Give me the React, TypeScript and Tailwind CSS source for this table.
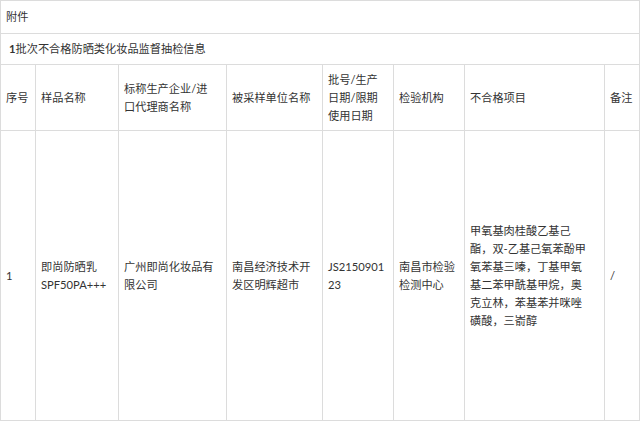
const font = { fontFamily: 'Lato, "Noto Sans CJK SC", sans-serif' }

const cols = [35, 83, 108, 96, 71, 71, 140, 35]

const headers: string[][] = [
  ['序号'],
  ['样品名称'],
  ['标称生产企业/进', '口代理商名称'],
  ['被采样单位名称'],
  ['批号/生产', '日期/限期', '使用日期'],
  ['检验机构'],
  ['不合格项目'],
  ['备注'],
]

const row: string[][] = [
  ['1'],
  ['即尚防晒乳', 'SPF50PA+++'],
  ['广州即尚化妆品有', '限公司'],
  ['南昌经济技术开', '发区明辉超市'],
  ['JS2150901', '23'],
  ['南昌市检验', '检测中心'],
  ['甲氧基肉桂酸乙基己', '酯，双-乙基己氧苯酚甲', '氧苯基三嗪，丁基甲氧', '基二苯甲酰基甲烷，奥', '克立林，苯基苯并咪唑', '磺酸，三嵛醇'],
  ['/'],
]

function Lines({ lines }: { lines: string[] }) {
  return (
    <>
      {lines.map((l, i) => (
        <div key={i} className="whitespace-nowrap">
          {l}
        </div>
      ))}
    </>
  )
}

export default function App() {
  const cell = 'border border-[#dcdcdc] pl-[5px] pr-[4px] align-middle text-left'
  return (
    <div className="w-[640px] h-[422px] bg-white overflow-hidden" style={font}>
      <table className="table-fixed border-collapse w-[639px] text-[11.2px] leading-[18px] text-[#333]">
        <colgroup>
          {cols.map((w, i) => (
            <col key={i} style={{ width: w }} />
          ))}
        </colgroup>
        <tbody>
          <tr className="h-[33px]">
            <td colSpan={8} className={cell}>
              附件
            </td>
          </tr>
          <tr className="h-[31px]">
            <td colSpan={8} className={cell + ' pl-[8px]'}>
              <span className="font-bold">1</span>批次不合格防晒类化妆品监督抽检信息
            </td>
          </tr>
          <tr className="h-[66px]">
            {headers.map((h, i) => (
              <td key={i} className={cell}>
                <Lines lines={h} />
              </td>
            ))}
          </tr>
          <tr className="h-[290px]">
            {row.map((h, i) => (
              <td key={i} className={cell}>
                <Lines lines={h} />
              </td>
            ))}
          </tr>
        </tbody>
      </table>
    </div>
  )
}
